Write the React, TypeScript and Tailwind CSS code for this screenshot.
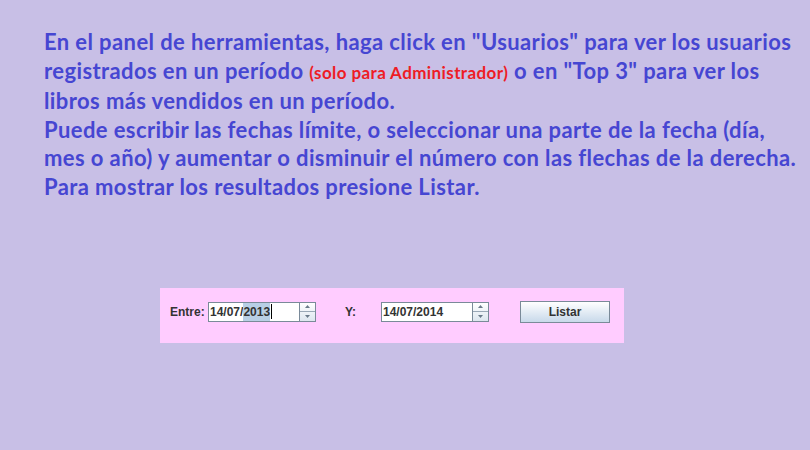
function Spinner() {
  return (
    <div className="flex h-[20px] w-[16px] flex-col border border-l-0 border-[#7a8a99] bg-gradient-to-b from-white to-[#dde6ef]">
      <div className="flex flex-1 items-center justify-center border-b border-[#9aa8b6]">
        <svg width="5" height="3" viewBox="0 0 5 3">
          <path d="M0 3 L2.5 0 L5 3 Z" fill="#6a7a8a" />
        </svg>
      </div>
      <div className="flex flex-1 items-center justify-center">
        <svg width="5" height="3" viewBox="0 0 5 3">
          <path d="M0 0 L2.5 3 L5 0 Z" fill="#6a7a8a" />
        </svg>
      </div>
    </div>
  );
}

function DateField({ value, selected }: { value: string; selected?: boolean }) {
  return (
    <div className="flex items-center">
      <div className="flex h-[20px] w-[92px] items-center border border-[#7a8a99] bg-white pl-[1px] text-[12px] font-bold text-[#333]">
        {selected ? (
          <>
            <span>14/07/</span>
            <span className="bg-[#b8cfe5]">2013</span>
            <span className="ml-[1px] h-[15px] w-[1px] bg-black" />
          </>
        ) : (
          <span>{value}</span>
        )}
      </div>
      <Spinner />
    </div>
  );
}

export default function App() {
  return (
    <div className="h-[450px] w-[810px] bg-[#c8bfe6] font-['Lato',sans-serif]">
      <div className="pl-[44px] pt-[28px] text-[22px] font-bold leading-[28.6px] tracking-[0.4px] whitespace-nowrap text-[#4646d2]">
        En el panel de herramientas, haga click en "Usuarios" para ver los usuarios
        <br />
        registrados en un período{" "}
        <span className="text-[17px] tracking-[0.4px] text-[#ee1c25]">(solo para Administrador)</span> o en "Top 3" para ver los
        <br />
        libros más vendidos en un período.
        <br />
        Puede escribir las fechas límite, o seleccionar una parte de la fecha (día,
        <br />
        mes o año) y aumentar o disminuir el número con las flechas de la derecha.
        <br />
        Para mostrar los resultados presione Listar.
      </div>

      <div className="ml-[160px] mt-[86px] flex h-[55px] w-[464px] items-center bg-[#ffccff] pb-[7px] pl-[10px] font-['Liberation_Sans',Arial,sans-serif] text-[12px] font-bold text-[#333]">
        <span className="w-[38px]">Entre:</span>
        <DateField value="14/07/2013" selected />
        <span className="ml-[29px] w-[36px]">Y:</span>
        <DateField value="14/07/2014" />
        <button className="ml-[31px] h-[22px] w-[90px] border border-[#7a8a99] bg-gradient-to-b from-white to-[#c8d9ea] text-[12px] font-bold text-[#333]">
          Listar
        </button>
      </div>
    </div>
  );
}
